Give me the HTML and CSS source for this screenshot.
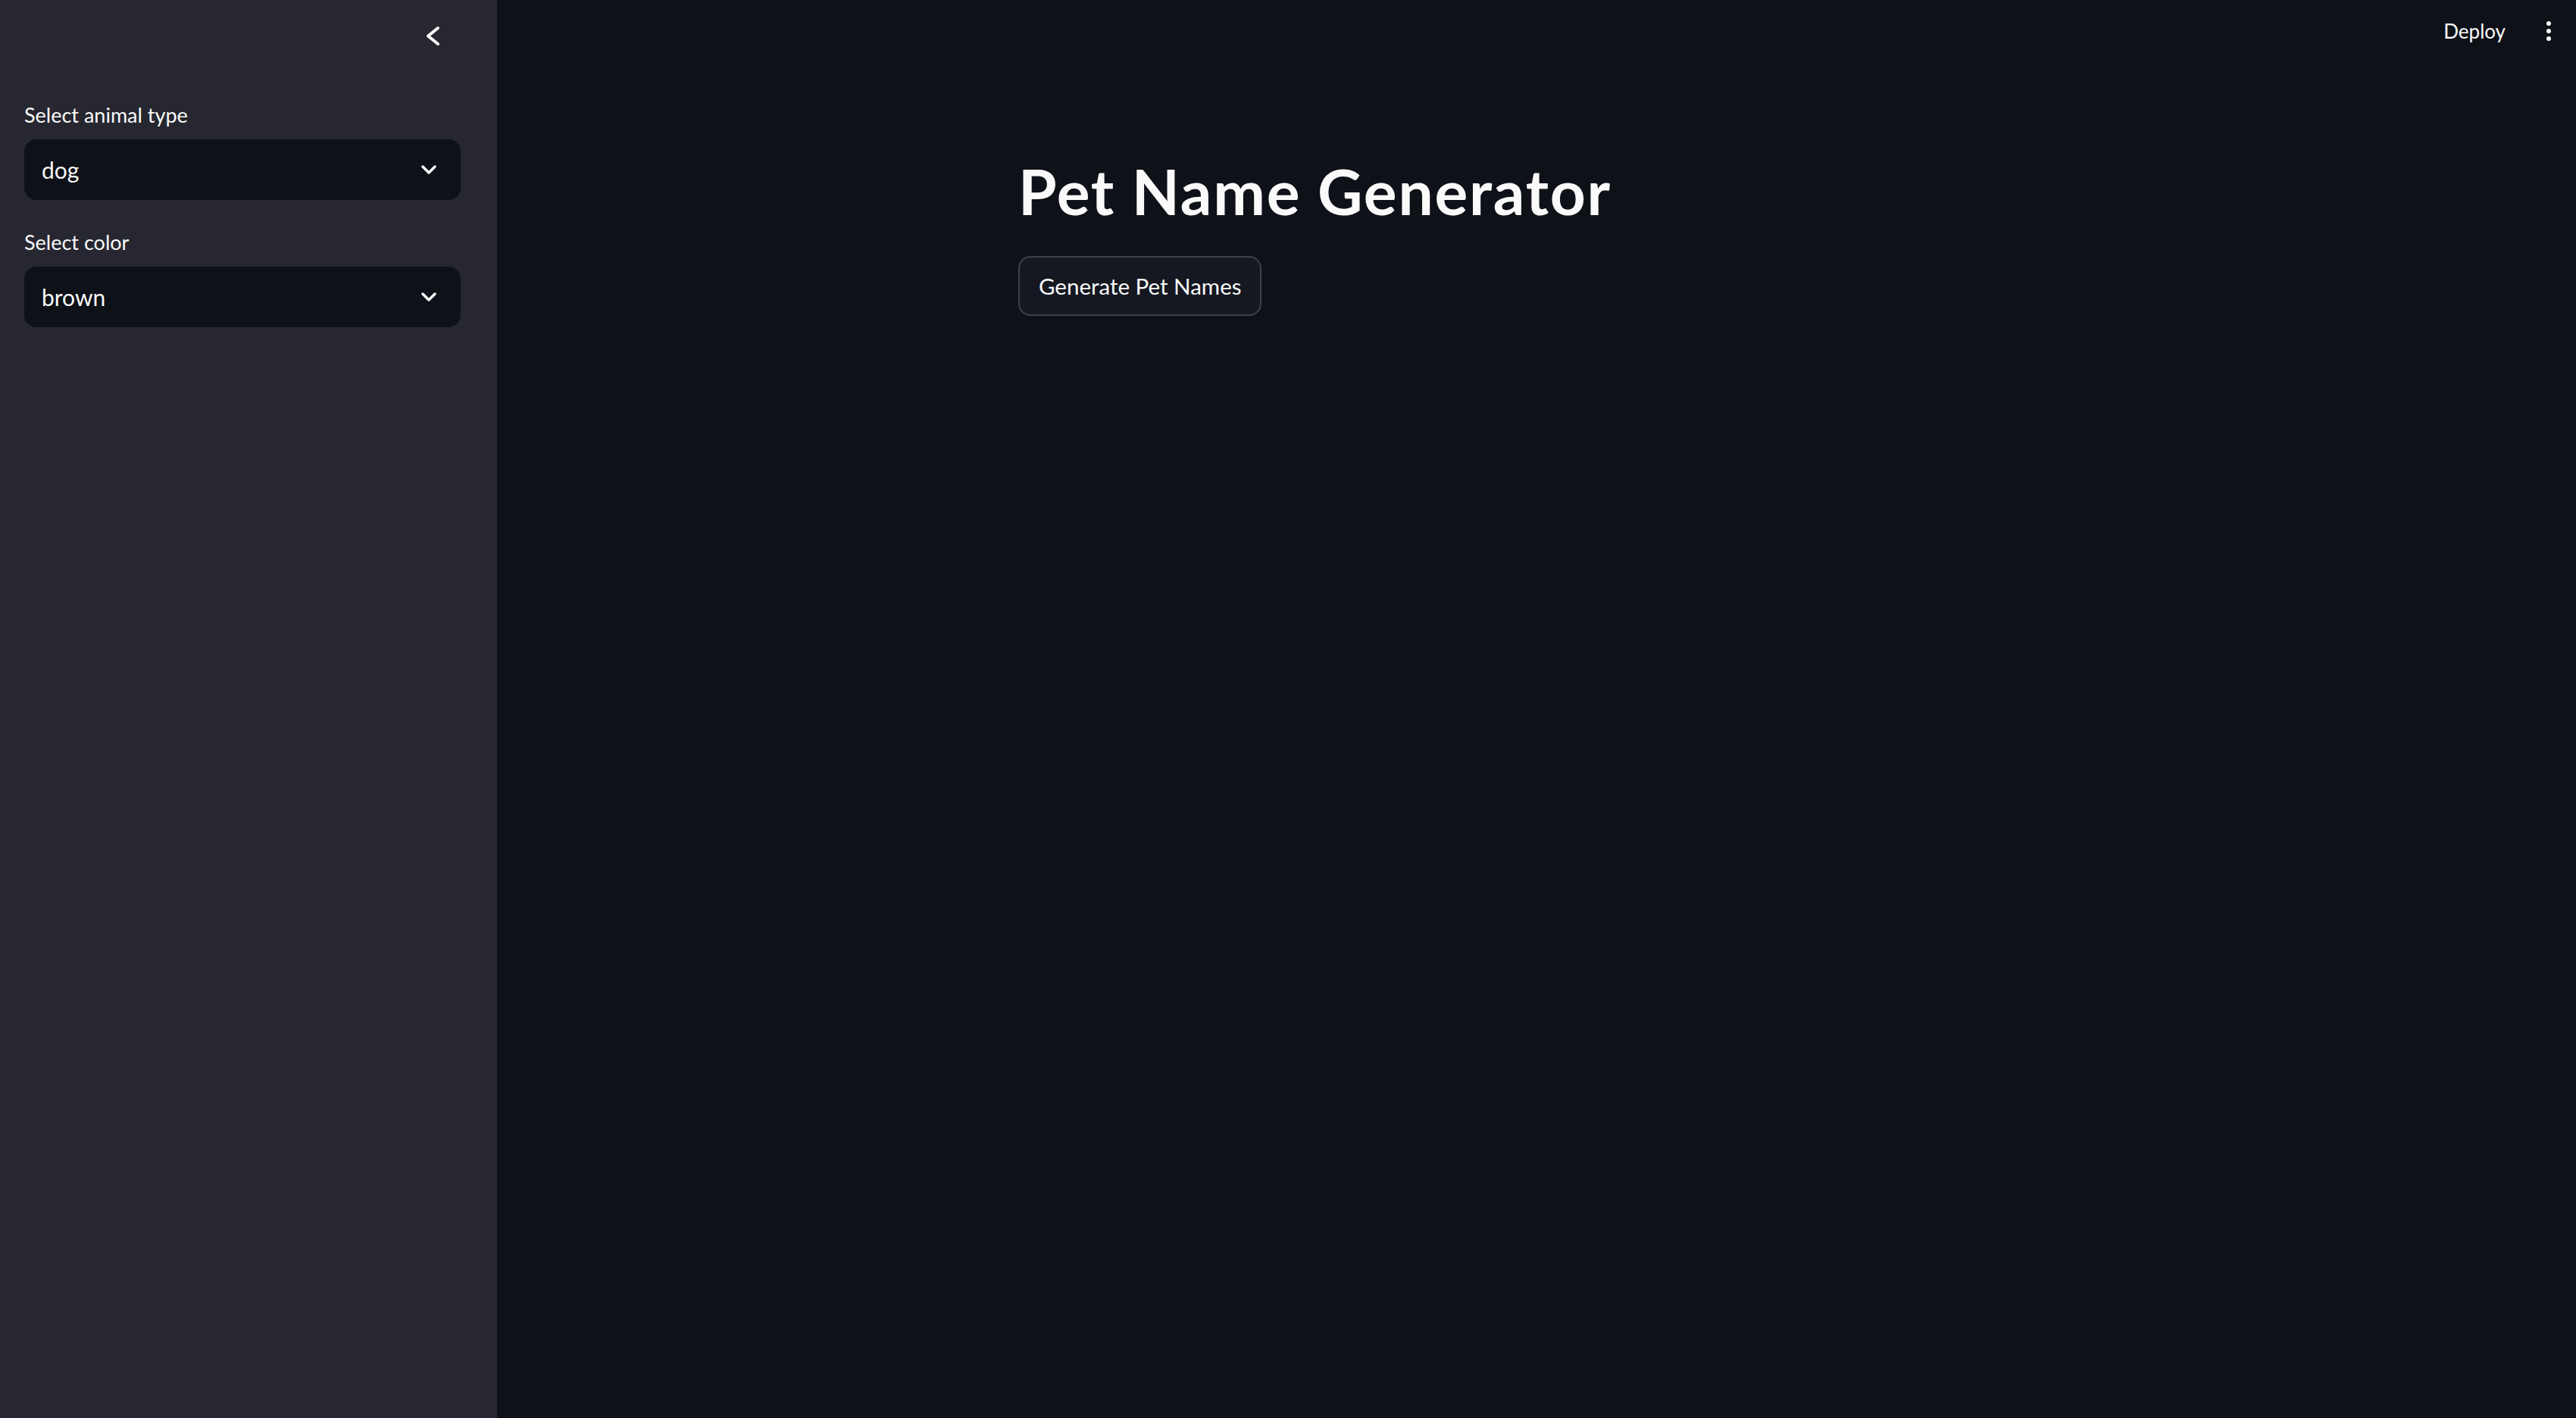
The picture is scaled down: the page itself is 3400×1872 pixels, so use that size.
FILE: index.html
```html
<!DOCTYPE html>
<html lang="en">
<head>
<meta charset="utf-8">
<title>Pet Name Generator</title>
<link rel="stylesheet" href="styles.css">
</head>
<body>
<div class="app">
  <aside class="sidebar">
    <div class="sidebar-header">
      <svg class="collapse-icon" width="48" height="48" viewBox="0 0 48 48" aria-hidden="true">
        <path d="M30 13 L17 23.5 L30 34" fill="none" stroke="#fafafa" stroke-width="4" stroke-linecap="round" stroke-linejoin="round"/>
      </svg>
    </div>
    <div class="sidebar-content">
      <div class="field">
        <div class="field-label">Select animal type</div>
        <div class="select">
          <span class="select-value">dog</span>
          <svg class="select-arrow" width="20" height="12" viewBox="0 0 20 12" aria-hidden="true">
            <path d="M2 2 L10 10 L18 2" fill="none" stroke="#fafafa" stroke-width="3.5" stroke-linecap="round" stroke-linejoin="round"/>
          </svg>
        </div>
      </div>
      <div class="field">
        <div class="field-label">Select color</div>
        <div class="select">
          <span class="select-value">brown</span>
          <svg class="select-arrow" width="20" height="12" viewBox="0 0 20 12" aria-hidden="true">
            <path d="M2 2 L10 10 L18 2" fill="none" stroke="#fafafa" stroke-width="3.5" stroke-linecap="round" stroke-linejoin="round"/>
          </svg>
        </div>
      </div>
    </div>
  </aside>
  <main class="main">
    <header class="topbar">
      <span class="deploy">Deploy</span>
      <span class="menu">
        <span class="dot"></span>
        <span class="dot"></span>
        <span class="dot"></span>
      </span>
    </header>
    <section class="block">
      <h1 class="title">Pet Name Generator</h1>
      <button class="btn">Generate Pet Names</button>
    </section>
  </main>
</div>
</body>
</html>
```
FILE: styles.css
```css
* { box-sizing: border-box; }
html, body {
  margin: 0;
  padding: 0;
  width: 3400px;
  height: 1872px;
  overflow: hidden;
  background: #0e1117;
  color: #fafafa;
  font-family: Lato, "Noto Sans", sans-serif;
}
.app {
  display: flex;
  width: 3400px;
  height: 1872px;
}
.sidebar {
  width: 656px;
  flex: none;
  background: #262730;
  display: flex;
  flex-direction: column;
}
.sidebar-header {
  height: 96px;
  padding: 24px 60px 24px 0;
  display: flex;
  justify-content: flex-end;
}
.collapse-icon { display: block; }
.sidebar-content {
  padding: 36px 48px 0 32px;
  display: flex;
  flex-direction: column;
  gap: 36px;
}
.field-label {
  font-size: 27px;
  line-height: 40px;
  height: 40px;
  margin-bottom: 12px;
}
.select {
  height: 80px;
  background: #0e1117;
  border-radius: 16px;
  display: flex;
  align-items: center;
  justify-content: space-between;
  padding: 0 32px 0 23px;
}
.select-value {
  font-size: 30px;
  line-height: 40px;
}
.select-arrow { display: block; }
.main {
  flex: 1;
  display: flex;
  flex-direction: column;
}
.topbar {
  height: 82px;
  display: flex;
  justify-content: flex-end;
  align-items: center;
  padding-right: 33px;
  gap: 54px;
}
.deploy {
  font-size: 26px;
  line-height: 40px;
}
.menu {
  display: flex;
  flex-direction: column;
  gap: 4px;
  width: 6px;
}
.dot {
  width: 6px;
  height: 6px;
  border-radius: 50%;
  background: #fafafa;
}
.block {
  width: 1368px;
  margin: 0 auto;
  padding-top: 122px;
}
.title {
  margin: 0;
  font-size: 82px;
  line-height: 96px;
  font-weight: 700;
  letter-spacing: 1.8px;
}
.btn {
  margin-top: 38px;
  height: 79px;
  padding: 0 25px;
  background: #151821;
  border: 2px solid #3f4149;
  border-radius: 16px;
  color: #fafafa;
  font-family: Lato, "Noto Sans", sans-serif;
  font-size: 29.5px;
  line-height: 40px;
}
```
